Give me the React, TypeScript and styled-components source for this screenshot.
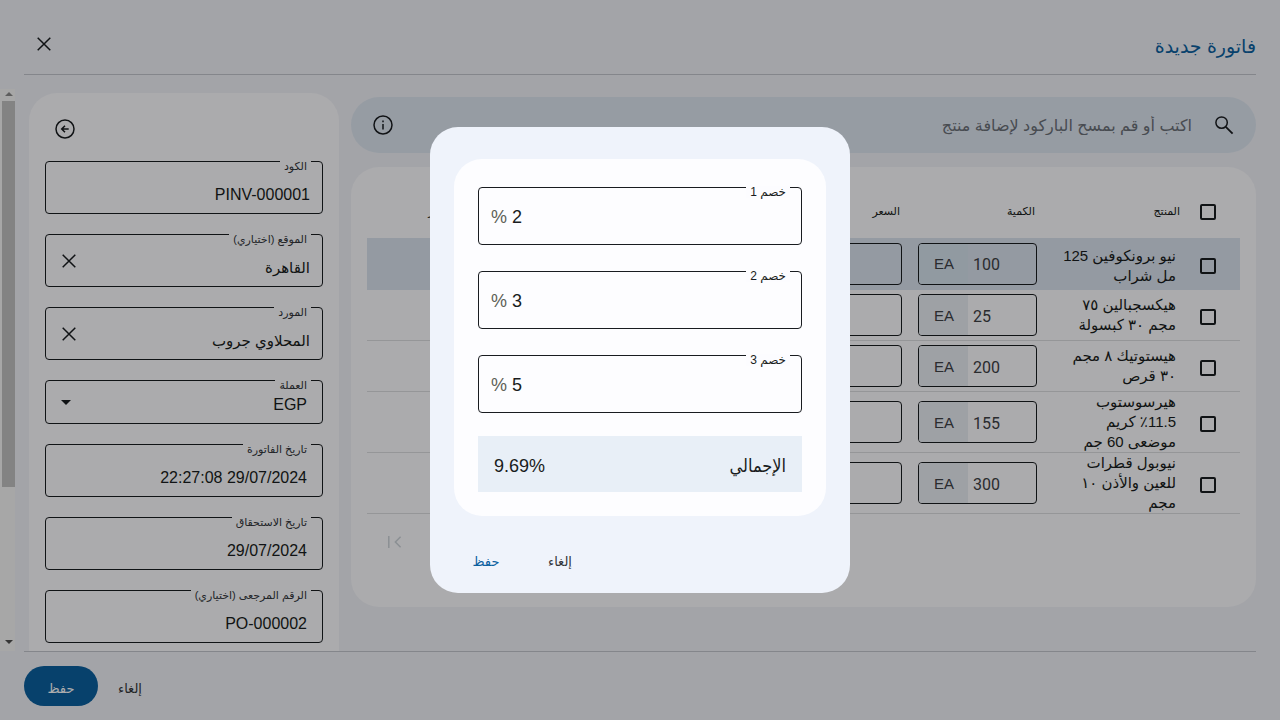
import React from "react";
import styled, { createGlobalStyle } from "styled-components";

const ink = "#191c20";
const blue = "#0b609f";
const canvas = "#f0f2f8";
const surface = "#fcfcff";

const GlobalStyle = createGlobalStyle`
  *, *::before, *::after { box-sizing: border-box; }
  body {
    margin: 0;
    background: ${canvas};
    color: ${ink};
    font-family: "Liberation Sans", "DejaVu Sans", sans-serif;
    font-size: 16px;
  }
  button, input, select { font-family: inherit; color: inherit; }
`;

const Page = styled.div`
  display: flex;
  flex-direction: column;
  height: 100vh;
  overflow: hidden;
`;

const Header = styled.header`
  display: flex;
  align-items: center;
  justify-content: space-between;
  margin: 0 24px;
  height: 75px;
  padding-top: 14px;
  border-bottom: 1px solid #c3c6cd;
`;

const Title = styled.h1`
  margin: 0;
  padding-top: 6px;
  color: ${blue};
  font-size: 19px;
  font-weight: 400;
  line-height: 28px;
`;

const IconButton = styled.button`
  display: flex;
  align-items: center;
  justify-content: center;
  flex: none;
  width: 40px;
  height: 40px;
  padding: 0;
  border: 0;
  background: none;
`;

const Body = styled.div`
  display: flex;
  flex: 1;
  min-height: 0;
  padding: 14px 24px 0 0;
`;

const Main = styled.main`
  display: flex;
  flex-direction: column;
  flex: 1;
  min-width: 0;
  gap: 14px;
  padding-top: 8px;
`;

const SearchBar = styled.label`
  display: flex;
  align-items: center;
  flex: none;
  height: 56px;
  padding: 0 12px;
  gap: 12px;
  border-radius: 28px;
  background: #dee6f1;
`;

const SearchInput = styled.input`
  flex: 1;
  min-width: 0;
  padding: 2px 0 0;
  border: 0;
  outline: 0;
  background: none;
  font-size: 16px;
  &::placeholder { color: #6b7078; opacity: 1; }
`;

const TableCard = styled.section`
  flex: none;
  padding: 16px 16px 45px;
  border-radius: 28px;
  background: ${surface};
`;

const Table = styled.table`
  width: 100%;
  table-layout: fixed;
  border-collapse: separate;
  border-spacing: 0;
`;

const HeadCell = styled.th<{ $inset: number }>`
  height: 55px;
  padding: 2px ${(p) => p.$inset}px 0 0;
  font-size: 11px;
  font-weight: 400;
  text-align: right;
`;

const Row = styled.tr<{ $active?: boolean }>`
  height: ${(p) => (p.$active ? 52 : 51)}px;
  background: ${(p) => (p.$active ? "#dbe3ef" : "none")};
`;

const Cell = styled.td<{ $active?: boolean }>`
  padding: 0 8px 0 8px;
  border-bottom: 1px solid ${(p) => (p.$active ? "#dbe3ef" : "#dcdde0")};
  vertical-align: middle;
`;

const CheckCell = styled(Cell)`
  padding: 4px 24px 0 0;
`;

const NameCell = styled(Cell)`
  padding-top: ${(p) => (p.$active ? 4 : 0)}px;
`;

const ProductName = styled.div`
  font-size: 15px;
  line-height: 20px;
  white-space: nowrap;
`;

const Check = styled.input`
  display: block;
  appearance: none;
  width: 16px;
  height: 16px;
  margin: 0;
  border: 2px solid ${ink};
  border-radius: 2px;
`;

const Quantity = styled.div`
  display: flex;
  align-items: stretch;
  width: 119px;
  height: 42px;
  overflow: hidden;
  border: 1px solid ${ink};
  border-radius: 4px;
`;

const QuantityInput = styled.input`
  flex: 1;
  min-width: 0;
  padding: 2px 5px 0;
  border: 0;
  outline: 0;
  background: none;
  font-family: Roboto, sans-serif;
  font-size: 16px;
  text-align: left;
  color: #3e4146;
`;

const Unit = styled.span<{ $active?: boolean }>`
  display: flex;
  align-items: center;
  justify-content: center;
  width: 49px;
  padding-left: 1px;
  background: ${(p) => (p.$active ? "#d6e3ee" : "#e9eef4")};
  font-size: 15px;
  color: #3e4146;
`;

const Pager = styled.nav`
  display: flex;
  justify-content: flex-end;
  padding: 8px 8px 0;
`;

const Aside = styled.aside`
  display: flex;
  flex-direction: column;
  flex: none;
  gap: 20px;
  width: 310px;
  margin: 4px 12px 0 14px;
  padding: 16px 16px 0;
  border-radius: 28px 28px 0 0;
  background: ${surface};
  overflow: hidden;
`;

const AsideTop = styled.div`
  display: flex;
  justify-content: flex-end;
  height: 32px;
`;

const Outline = styled.div<{ $height: number }>`
  position: relative;
  display: flex;
  align-items: center;
  flex: none;
  height: ${(p) => p.$height}px;
  border: 1px solid ${ink};
  border-radius: 4px;
`;

const FloatingLabel = styled.label<{ $large?: boolean }>`
  position: absolute;
  top: -2px;
  right: 11px;
  padding: 0 4px;
  background: ${surface};
  font-size: ${(p) => (p.$large ? 12 : 11)}px;
  line-height: 12px;
  color: ${(p) => (p.$large ? ink : "#33363b")};
`;

const FieldInput = styled.input<{ $inset: number }>`
  flex: 1;
  min-width: 0;
  height: 100%;
  padding: 14px ${(p) => p.$inset}px 0 8px;
  border: 0;
  outline: 0;
  background: none;
  font-size: ${(p) => (p.dir === "ltr" ? 16 : 15)}px;
  text-align: right;
`;

const FieldSelect = styled.select`
  flex: 1;
  height: 100%;
  padding: 4px 15px 0 0;
  appearance: none;
  border: 0;
  outline: 0;
  background: none;
  font-size: 16px;
`;

const SelectArrow = styled.svg`
  flex: none;
  margin-left: 15px;
`;

const ClearButton = styled(IconButton)`
  margin-left: 3px;
`;

const ScrollTrack = styled.div`
  display: flex;
  flex-direction: column;
  align-items: center;
  justify-content: space-between;
  flex: none;
  width: 15px;
  padding: 3px 0 7px 2px;
  background: #f6f6f6;
`;

const ScrollThumb = styled.div`
  width: 100%;
  height: 386px;
  margin: 5px 0 auto;
  background: #c1c1c1;
`;

const Footer = styled.footer`
  display: flex;
  align-items: flex-start;
  justify-content: flex-end;
  flex: none;
  height: 69px;
  margin: 0 24px;
  padding-top: 14px;
  border-top: 1px solid #c3c6cd;
`;

const TextButton = styled.button<{ $accent?: boolean }>`
  width: 64px;
  height: 40px;
  padding: 4px 0 0;
  border: 0;
  background: none;
  font-size: 13px;
  color: ${(p) => (p.$accent ? blue : "#33363b")};
`;

const PrimaryButton = styled.button`
  width: 74px;
  height: 40px;
  padding: 4px 0 0;
  border: 0;
  border-radius: 20px;
  background: ${blue};
  color: #ffffff;
  font-size: 13px;
`;

const Scrim = styled.div`
  position: fixed;
  inset: 0;
  display: flex;
  align-items: center;
  justify-content: center;
  background: rgba(0, 0, 0, 0.32);
`;

const Dialog = styled.div`
  width: 420px;
  padding: 32px 24px 14px;
  border-radius: 28px;
  background: #eff3fb;
`;

const DialogCard = styled.div`
  display: flex;
  flex-direction: column;
  gap: 26px;
  padding: 28px 24px 24px;
  border-radius: 28px;
  background: #fdfdff;
`;

const PercentRow = styled.div`
  display: flex;
  align-items: center;
  gap: 5px;
  flex: 1;
  padding: 3px 12px 0;
  font-size: 18px;
`;

const PercentSign = styled.span`
  color: #5d6157;
`;

const PercentInput = styled.input`
  flex: 1;
  min-width: 0;
  padding: 0;
  border: 0;
  outline: 0;
  background: none;
  font-size: 18px;
`;

const Total = styled.div`
  display: flex;
  align-items: center;
  justify-content: space-between;
  height: 56px;
  margin-top: -3px;
  padding: 4px 16px 0;
  background: #e8eff7;
  font-family: "Liberation Sans", "DejaVu Sans Condensed", sans-serif;
  font-size: 18px;
`;

const Actions = styled.div`
  display: flex;
  justify-content: flex-end;
  gap: 10px;
  padding-top: 23px;
`;

const CloseIcon = () => (
  <svg width="16" height="16" viewBox="0 0 16 16" fill="none" stroke={ink} strokeWidth="1.5">
    <path d="M1.7 1.7 14.3 14.3M14.3 1.7 1.7 14.3" />
  </svg>
);

const SearchIcon = () => (
  <svg width="20" height="20" viewBox="0 0 20 20" fill="none" stroke={ink} strokeWidth="1.5">
    <circle cx="7.6" cy="7.6" r="5.7" />
    <path d="M11.8 11.8 18.6 18.6" strokeWidth="1.8" />
  </svg>
);

const InfoIcon = () => (
  <svg width="20" height="20" viewBox="0 0 20 20" fill="none" stroke={ink} strokeWidth="1.5">
    <circle cx="10" cy="10" r="9" />
    <path d="M10 9v5.5M10 5.5v1.8" />
  </svg>
);

const BackIcon = () => (
  <svg width="20" height="20" viewBox="0 0 20 20" fill="none" stroke={ink} strokeWidth="1.5">
    <circle cx="10" cy="10" r="9" />
    <path d="M13.7 10H7M10 6.7 6.7 10l3.3 3.3" />
  </svg>
);

const FirstPageIcon = () => (
  <svg width="16" height="16" viewBox="0 0 16 16" fill="none" stroke="#cdd3da" strokeWidth="1.5">
    <path d="M1.8 2v12M13.6 2.8 8.4 8l5.2 5.2" />
  </svg>
);

interface FieldProps {
  id: string;
  label: string;
  value: string;
  inset?: number;
  ltr?: boolean;
  clearable?: boolean;
}

const Field = ({ id, label, value, inset = 15, ltr, clearable }: FieldProps) => (
  <Outline $height={53}>
    <FieldInput id={id} defaultValue={value} dir={ltr ? "ltr" : "rtl"} $inset={inset} />
    {clearable && (
      <ClearButton type="button" aria-label="مسح">
        <CloseIcon />
      </ClearButton>
    )}
    <FloatingLabel htmlFor={id}>{label}</FloatingLabel>
  </Outline>
);

const products = [
  { lines: ["نيو برونكوفين 125", "مل شراب"], quantity: "100" },
  { lines: ["هيكسجبالين ٧٥", "مجم ٣٠ كبسولة"], quantity: "25" },
  { lines: ["هيستوتيك ٨ مجم", "٣٠ قرص"], quantity: "200" },
  { lines: ["هيرسوستوب", "٪11.5 كريم", "موضعى 60 جم"], quantity: "155" },
  { lines: ["نيوبول قطرات", "للعين والأذن ١٠", "مجم"], quantity: "300" },
];

const discounts = ["2", "3", "5"];

export default function App() {
  return (
    <>
      <GlobalStyle />
      <Page dir="rtl">
        <Header>
          <Title>فاتورة جديدة</Title>
          <IconButton type="button" aria-label="إغلاق">
            <CloseIcon />
          </IconButton>
        </Header>

        <Body>
          <Main>
            <SearchBar>
              <IconButton as="span">
                <SearchIcon />
              </IconButton>
              <SearchInput placeholder="اكتب أو قم بمسح الباركود لإضافة منتج" />
              <IconButton type="button" aria-label="معلومات">
                <InfoIcon />
              </IconButton>
            </SearchBar>

            <TableCard>
              <Table>
                <colgroup>
                  <col style={{ width: 56 }} />
                  <col style={{ width: 139 }} />
                  <col style={{ width: 135 }} />
                  <col style={{ width: 135 }} />
                  <col />
                  <col />
                  <col />
                </colgroup>
                <thead>
                  <tr>
                    <HeadCell $inset={24}>
                      <Check type="checkbox" aria-label="تحديد الكل" />
                    </HeadCell>
                    <HeadCell $inset={4}>المنتج</HeadCell>
                    <HeadCell $inset={10}>الكمية</HeadCell>
                    <HeadCell $inset={10}>السعر</HeadCell>
                    <HeadCell $inset={10} />
                    <HeadCell $inset={10} />
                    <HeadCell $inset={12}>إجمالي السعر</HeadCell>
                  </tr>
                </thead>
                <tbody>
                  {products.map((product, i) => (
                    <Row key={product.quantity} $active={i === 0}>
                      <CheckCell $active={i === 0}>
                        <Check type="checkbox" aria-label={product.lines.join(" ")} />
                      </CheckCell>
                      <NameCell $active={i === 0}>
                        {product.lines.map((line) => (
                          <ProductName key={line}>{line}</ProductName>
                        ))}
                      </NameCell>
                      <Cell $active={i === 0}>
                        <Quantity>
                          <QuantityInput dir="ltr" aria-label="الكمية" defaultValue={product.quantity} />
                          <Unit $active={i === 0}>EA</Unit>
                        </Quantity>
                      </Cell>
                      <Cell $active={i === 0}>
                        <Quantity>
                          <QuantityInput aria-label="السعر" />
                        </Quantity>
                      </Cell>
                      <Cell $active={i === 0} />
                      <Cell $active={i === 0} />
                      <Cell $active={i === 0} />
                    </Row>
                  ))}
                </tbody>
              </Table>
              <Pager>
                <IconButton type="button" aria-label="الصفحة الأخيرة">
                  <FirstPageIcon />
                </IconButton>
              </Pager>
            </TableCard>
          </Main>

          <Aside>
            <AsideTop>
              <IconButton type="button" aria-label="طي">
                <BackIcon />
              </IconButton>
            </AsideTop>
            <Field id="code" label="الكود" value="PINV-000001" inset={12} ltr />
            <Field id="location" label="الموقع (اختياري)" value="القاهرة" inset={12} clearable />
            <Field id="supplier" label="المورد" value="المحلاوي جروب" inset={12} clearable />
            <Outline $height={44}>
              <FieldSelect id="currency">
                <option>EGP</option>
              </FieldSelect>
              <SelectArrow width="10" height="5" viewBox="0 0 10 5">
                <path d="M0 0h10L5 5z" fill={ink} />
              </SelectArrow>
              <FloatingLabel htmlFor="currency">العملة</FloatingLabel>
            </Outline>
            <Field id="issued" label="تاريخ الفاتورة" value="22:27:08 29/07/2024" ltr />
            <Field id="due" label="تاريخ الاستحقاق" value="29/07/2024" ltr />
            <Field id="reference" label="الرقم المرجعى (اختياري)" value="PO-000002" ltr />
          </Aside>

          <ScrollTrack aria-hidden="true">
            <svg width="8" height="4" viewBox="0 0 8 4">
              <path d="M0 4h8L4 0z" fill="#8b8b8b" />
            </svg>
            <ScrollThumb />
            <svg width="8" height="4" viewBox="0 0 8 4">
              <path d="M0 0h8L4 4z" fill="#505050" />
            </svg>
          </ScrollTrack>
        </Body>

        <Footer>
          <TextButton type="button">إلغاء</TextButton>
          <PrimaryButton type="button">حفظ</PrimaryButton>
        </Footer>
      </Page>

      <Scrim dir="rtl">
        <Dialog role="dialog" aria-modal="true" aria-label="الخصم">
          <DialogCard>
            {discounts.map((value, i) => (
              <Outline key={value} $height={58}>
                <PercentRow dir="ltr">
                  <PercentSign>%</PercentSign>
                  <PercentInput id={`discount-${i}`} defaultValue={value} />
                </PercentRow>
                <FloatingLabel $large htmlFor={`discount-${i}`}>
                  خصم {i + 1}
                </FloatingLabel>
              </Outline>
            ))}
            <Total>
              <span>الإجمالي</span>
              <span dir="ltr">9.69%</span>
            </Total>
          </DialogCard>
          <Actions>
            <TextButton type="button">إلغاء</TextButton>
            <TextButton type="button" $accent>
              حفظ
            </TextButton>
          </Actions>
        </Dialog>
      </Scrim>
    </>
  );
}
